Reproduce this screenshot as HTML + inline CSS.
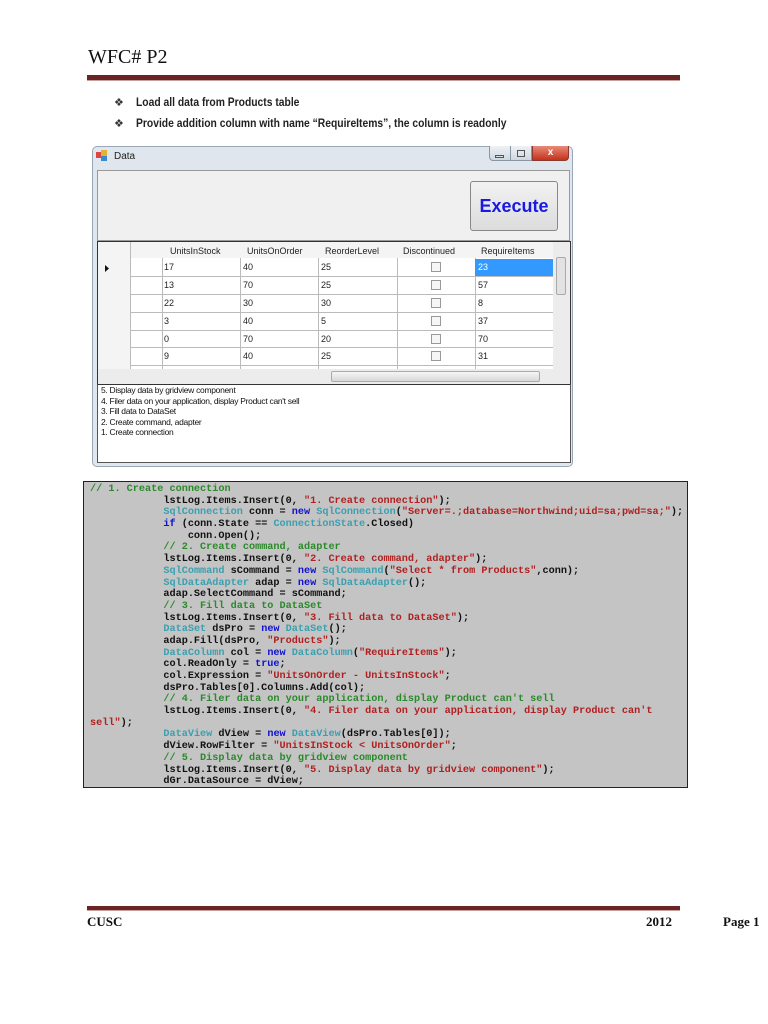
<!DOCTYPE html>
<html><head><meta charset="utf-8"><style>
*{margin:0;padding:0;box-sizing:border-box}
body{width:768px;height:1024px;background:#fff;position:relative;overflow:hidden;font-family:"Liberation Sans",sans-serif}
.a{position:absolute}
.title{left:88px;top:46px;font-family:"Liberation Serif",serif;font-size:20px;color:#111}
.bar{background:#6b2424;height:5px}
.bul{font-family:"Liberation Sans",sans-serif;font-size:12px;font-weight:bold;color:#222;transform:scaleX(0.86);transform-origin:left}
.win{left:92px;top:146px;width:481px;height:321px;background:#dfe6ee;border:1px solid #9aa7b6;border-radius:5px}
.code{left:83px;top:481px;width:605px;height:307px;background:#c4c4c4;border:1.5px solid #222;font-family:"Liberation Mono",monospace;font-size:10.2px;padding:2px 0 0 6px;color:#111;font-weight:bold}
.code div{white-space:pre;height:11.7px;line-height:11.7px;overflow:visible}
.c{color:#2a8a2a}.s{color:#b02020}.t{color:#3aa0b0}.k{color:#1010d0}
.cell{position:absolute;font-size:9px;color:#222}
</style></head><body>
<div class="a title">WFC# P2</div>
<div class="a bar" style="left:87px;top:75px;width:593px"></div>
<div class="a" style="left:87px;top:80px;width:593px;height:1px;background:#c9a0a0"></div>
<div class="a" style="left:114px;top:96px;font-size:11px;color:#333">❖</div>
<div class="a bul" style="left:136px;top:95px">Load all data from Products table</div>
<div class="a" style="left:114px;top:117px;font-size:11px;color:#333">❖</div>
<div class="a bul" style="left:136px;top:116px">Provide addition column with name “RequireItems”, the column is readonly</div>

<div class="a win"></div>
<div class="a" style="left:96px;top:152px;width:6px;height:6px;background:#d44"></div>
<div class="a" style="left:101px;top:150px;width:6px;height:6px;background:#e8b030"></div>
<div class="a" style="left:101px;top:156px;width:6px;height:5px;background:#3a8ad0"></div>
<div class="a" style="left:114px;top:151px;font-size:10px;color:#222">Data</div>
<div class="a" style="left:489px;top:146px;width:43px;height:15px;background:linear-gradient(#eef2f6,#cfd7e0);border:1px solid #8a96a4;border-top:none;border-radius:0 0 0 4px"></div>
<div class="a" style="left:510px;top:146px;width:1px;height:15px;background:#8a96a4"></div>
<div class="a" style="left:495px;top:155px;width:9px;height:3px;border:1px solid #555"></div>
<div class="a" style="left:517px;top:150px;width:8px;height:7px;border:1px solid #555"></div>
<div class="a" style="left:532px;top:146px;width:37px;height:15px;background:linear-gradient(#e88a78,#c4321c);border:1px solid #8a3a30;border-top:none;border-radius:0 0 4px 0;color:#fff;font-size:10px;font-weight:bold;text-align:center;line-height:13px">x</div>
<div class="a" style="left:97px;top:170px;width:473px;height:71px;background:#f0f0f0;border:1px solid #999"></div>
<div class="a" style="left:470px;top:181px;width:88px;height:50px;background:linear-gradient(#f2f2f2,#dcdcdc);border:1px solid #888;border-radius:3px;color:#1a1ae0;font-size:18px;font-weight:bold;text-align:center;line-height:48px">Execute</div>
<div class="a" style="left:97px;top:241px;width:474px;height:143px;background:#ababab;border:1px solid #333"></div>
<div class="a" style="left:98px;top:242px;width:455px;height:127px;background:#fff"></div>
<div class="a" style="left:98px;top:242px;width:455px;height:16px;background:#f4f4f4"></div>
<div class="a" style="left:98px;top:242px;width:32px;height:127px;background:#f4f4f4"></div>
<svg class="a" style="left:98px;top:242px" width="455" height="127">
<g stroke="#bbb" stroke-width="1">
<line x1="32.5" y1="0" x2="32.5" y2="127"/><line x1="64.5" y1="16" x2="64.5" y2="127"/><line x1="142.5" y1="16" x2="142.5" y2="127"/><line x1="220.5" y1="16" x2="220.5" y2="127"/><line x1="299.5" y1="16" x2="299.5" y2="127"/><line x1="377.5" y1="16" x2="377.5" y2="127"/>
<line x1="32" y1="34.5" x2="455" y2="34.5"/><line x1="32" y1="52.5" x2="455" y2="52.5"/><line x1="32" y1="70.5" x2="455" y2="70.5"/><line x1="32" y1="88.5" x2="455" y2="88.5"/><line x1="32" y1="105.5" x2="455" y2="105.5"/><line x1="32" y1="123.5" x2="455" y2="123.5"/>
</g>
<rect x="377" y="17" width="78" height="17" fill="#3399ff"/>
<path d="M7 23 L11 26.5 L7 30Z" fill="#111"/>
<g fill="#f6f6f6" stroke="#999"><rect x="333.5" y="20.5" width="9" height="9"/><rect x="333.5" y="38.5" width="9" height="9"/><rect x="333.5" y="56.5" width="9" height="9"/><rect x="333.5" y="74.5" width="9" height="9"/><rect x="333.5" y="92.5" width="9" height="9"/><rect x="333.5" y="109.5" width="9" height="9"/></g>
</svg>
<div class="cell" style="left:170px;top:246px">UnitsInStock</div><div class="cell" style="left:247px;top:246px">UnitsOnOrder</div><div class="cell" style="left:325px;top:246px">ReorderLevel</div><div class="cell" style="left:403px;top:246px">Discontinued</div><div class="cell" style="left:481px;top:246px">RequireItems</div>
<div class="cell" style="left:164px;top:262px">17</div><div class="cell" style="left:243px;top:262px">40</div><div class="cell" style="left:321px;top:262px">25</div><div class="cell" style="left:478px;top:262px;color:#fff">23</div>
<div class="cell" style="left:164px;top:280px">13</div><div class="cell" style="left:243px;top:280px">70</div><div class="cell" style="left:321px;top:280px">25</div><div class="cell" style="left:478px;top:280px">57</div>
<div class="cell" style="left:164px;top:298px">22</div><div class="cell" style="left:243px;top:298px">30</div><div class="cell" style="left:321px;top:298px">30</div><div class="cell" style="left:478px;top:298px">8</div>
<div class="cell" style="left:164px;top:316px">3</div><div class="cell" style="left:243px;top:316px">40</div><div class="cell" style="left:321px;top:316px">5</div><div class="cell" style="left:478px;top:316px">37</div>
<div class="cell" style="left:164px;top:334px">0</div><div class="cell" style="left:243px;top:334px">70</div><div class="cell" style="left:321px;top:334px">20</div><div class="cell" style="left:478px;top:334px">70</div>
<div class="cell" style="left:164px;top:351px">9</div><div class="cell" style="left:243px;top:351px">40</div><div class="cell" style="left:321px;top:351px">25</div><div class="cell" style="left:478px;top:351px">31</div>
<div class="a" style="left:553px;top:242px;width:17px;height:127px;background:#ececec"></div>
<div class="a" style="left:556px;top:257px;width:10px;height:38px;background:#e2e2e2;border:1px solid #aaa;border-radius:2px"></div>
<div class="a" style="left:98px;top:369px;width:472px;height:15px;background:#ececec"></div>
<div class="a" style="left:331px;top:371px;width:209px;height:11px;background:linear-gradient(#f6f6f6,#d8d8d8);border:1px solid #aaa;border-radius:2px"></div>
<div class="a" style="left:97px;top:384px;width:474px;height:79px;background:#fff;border:1px solid #555;border-top:1px solid #333;font-size:8.5px;line-height:10.5px;padding:0 0 0 3px;color:#111;letter-spacing:-0.3px">5. Display data by gridview component<br>4. Filer data on your application, display Product can't sell<br>3. Fill data to DataSet<br>2. Create command, adapter<br>1. Create connection</div>

<div class="a code"><div><span class="c">// 1. Create connection</span></div><div>            lstLog.Items.Insert(0, <span class="s">"1. Create connection"</span>);</div><div>            <span class="t">SqlConnection</span> conn = <span class="k">new</span> <span class="t">SqlConnection</span>(<span class="s">"Server=.;database=Northwind;uid=sa;pwd=sa;"</span>);</div><div>            <span class="k">if</span> (conn.State == <span class="t">ConnectionState</span>.Closed)</div><div>                conn.Open();</div><div>            <span class="c">// 2. Create command, adapter</span></div><div>            lstLog.Items.Insert(0, <span class="s">"2. Create command, adapter"</span>);</div><div>            <span class="t">SqlCommand</span> sCommand = <span class="k">new</span> <span class="t">SqlCommand</span>(<span class="s">"Select * from Products"</span>,conn);</div><div>            <span class="t">SqlDataAdapter</span> adap = <span class="k">new</span> <span class="t">SqlDataAdapter</span>();</div><div>            adap.SelectCommand = sCommand;</div><div>            <span class="c">// 3. Fill data to DataSet</span></div><div>            lstLog.Items.Insert(0, <span class="s">"3. Fill data to DataSet"</span>);</div><div>            <span class="t">DataSet</span> dsPro = <span class="k">new</span> <span class="t">DataSet</span>();</div><div>            adap.Fill(dsPro, <span class="s">"Products"</span>);</div><div>            <span class="t">DataColumn</span> col = <span class="k">new</span> <span class="t">DataColumn</span>(<span class="s">"RequireItems"</span>);</div><div>            col.ReadOnly = <span class="k">true</span>;</div><div>            col.Expression = <span class="s">"UnitsOnOrder - UnitsInStock"</span>;</div><div>            dsPro.Tables[0].Columns.Add(col);</div><div>            <span class="c">// 4. Filer data on your application, display Product can't sell</span></div><div>            lstLog.Items.Insert(0, <span class="s">"4. Filer data on your application, display Product can't</span></div><div><span class="s">sell"</span>);</div><div>            <span class="t">DataView</span> dView = <span class="k">new</span> <span class="t">DataView</span>(dsPro.Tables[0]);</div><div>            dView.RowFilter = <span class="s">"UnitsInStock &lt; UnitsOnOrder"</span>;</div><div>            <span class="c">// 5. Display data by gridview component</span></div><div>            lstLog.Items.Insert(0, <span class="s">"5. Display data by gridview component"</span>);</div><div>            dGr.DataSource = dView;</div></div>

<div class="a bar" style="left:87px;top:906px;width:593px;height:4px"></div>
<div class="a" style="left:87px;top:910px;width:593px;height:1px;background:#c9a0a0"></div>
<div class="a" style="left:87px;top:914px;font-family:'Liberation Serif',serif;font-size:13px;font-weight:bold;color:#111">CUSC</div>
<div class="a" style="left:646px;top:914px;font-family:'Liberation Serif',serif;font-size:13px;font-weight:bold;color:#111">2012</div>
<div class="a" style="left:723px;top:914px;font-family:'Liberation Serif',serif;font-size:13px;font-weight:bold;color:#111">Page 1</div>
</body></html>
